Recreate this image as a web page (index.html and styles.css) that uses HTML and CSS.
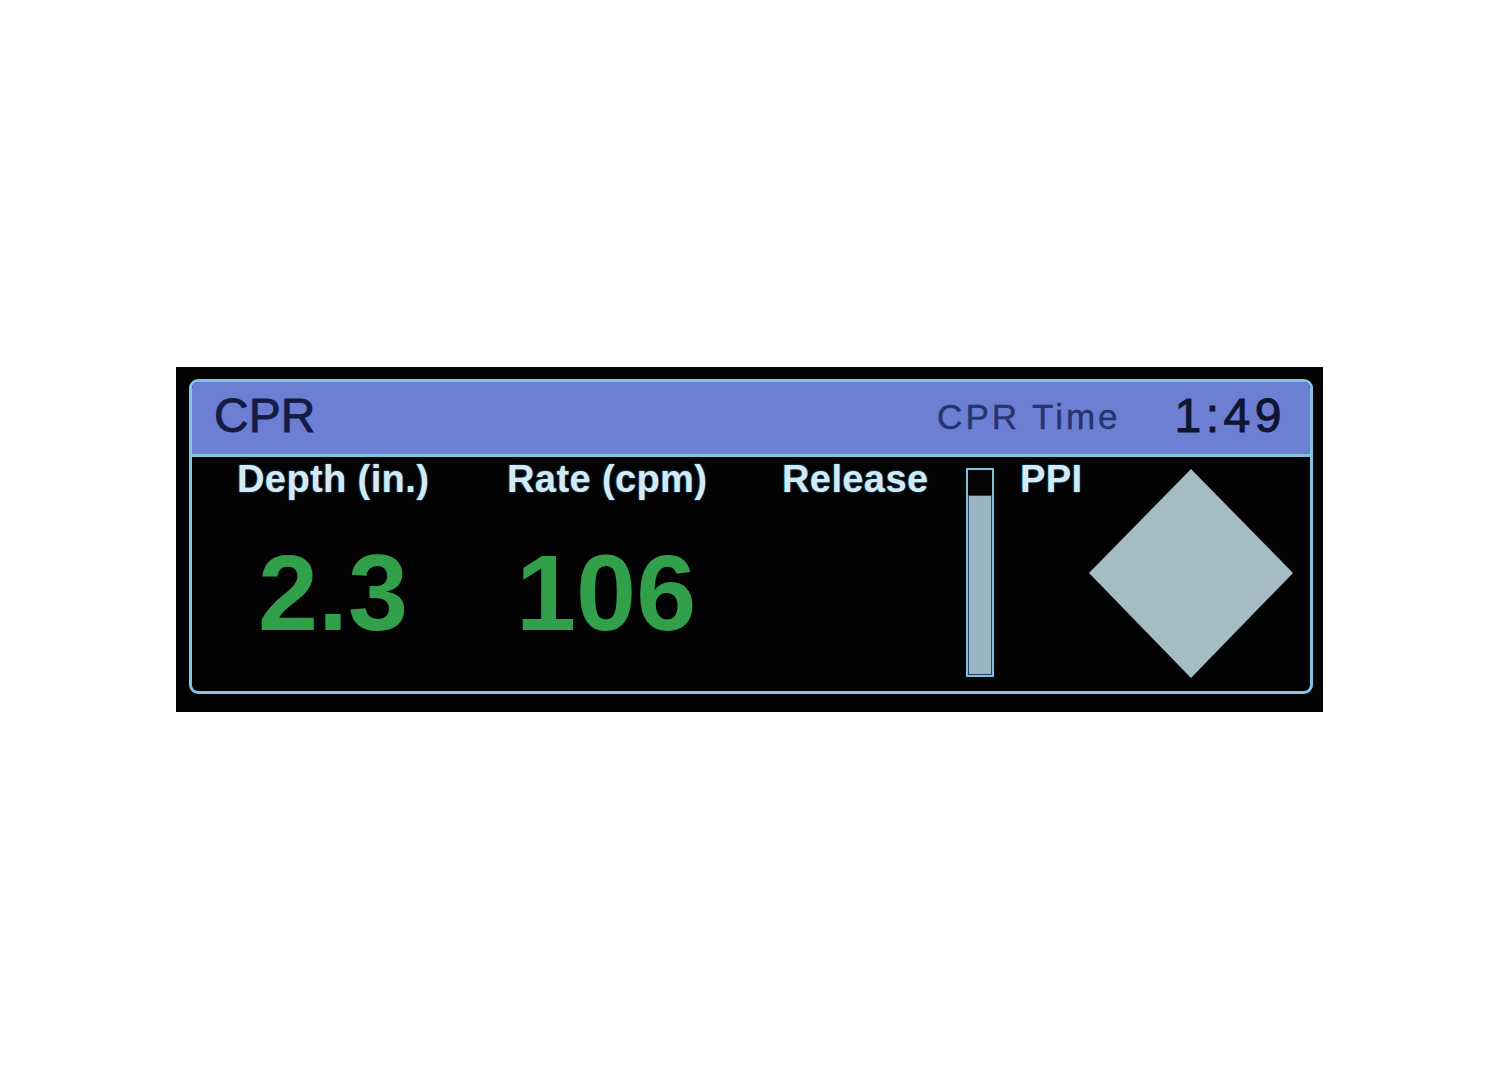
FILE: index.html
```html
<!DOCTYPE html>
<html lang="en">
  <head>
    <meta charset="UTF-8" />
    <meta name="viewport" content="width=device-width, initial-scale=1.0" />
    <title>CPR Monitor</title>
    <link rel="stylesheet" href="styles.css">
  </head>
  <body>
    <div class="screen">
      <div class="panel">
        <div class="header">
          <span class="title">CPR</span>
          <span class="time-label">CPR Time</span>
          <span class="time">1:49</span>
        </div>

        <div class="readouts">
          <div class="col col-depth">
            <div class="label">Depth (in.)</div>
            <div class="value">2.3</div>
          </div>
          <div class="col col-rate">
            <div class="label">Rate (cpm)</div>
            <div class="value">106</div>
          </div>
          <div class="col col-release">
            <div class="label">Release</div>
          </div>
          <div class="bar">
            <div class="bar-fill" style="height: 87%"></div>
          </div>
          <div class="col col-ppi">
            <div class="label">PPI</div>
            <svg class="diamond" width="206" height="211" viewBox="0 0 206 211">
              <polygon points="1,105 103,1 205,105 103,210" fill="#a5bcc4" />
            </svg>
          </div>
        </div>
      </div>
    </div>
  </body>
</html>
```

FILE: styles.css
```css
body {
  margin: 0;
  padding-top: 367px;
  background-color: #ffffff;
  font-family: "Liberation Sans", Arial, sans-serif;
}

.screen {
  width: 1147px;
  height: 345px;
  margin: 0 auto 0 176px;
  padding: 12px 10px 18px 13px;
  box-sizing: border-box;
  background-color: #030303;
}

.panel {
  height: 100%;
  box-sizing: border-box;
  border: 3px solid #84c3e4;
  border-radius: 9px;
  overflow: hidden;
  display: flex;
  flex-direction: column;
}

.header {
  height: 75px;
  flex-shrink: 0;
  display: flex;
  align-items: center;
  padding: 0 24px 6px 22px;
  box-sizing: border-box;
  background-color: #6c7fd3;
  border-bottom: 3px solid #84c3e4;
}

.title {
  font-size: 48px;
  color: #151a46;
  -webkit-text-stroke: 0.8px #151a46;
  flex: 1;
}

.time-label {
  font-size: 35px;
  letter-spacing: 3px;
  color: #27326f;
  -webkit-text-stroke: 0.4px #27326f;
  margin-right: 54px;
  padding-top: 3px;
}

.time {
  font-size: 48px;
  letter-spacing: 4.5px;
  color: #0f1431;
  -webkit-text-stroke: 1px #0f1431;
}

.readouts {
  flex: 1;
  display: flex;
}

.label {
  margin-top: 2px;
  font-size: 38px;
  font-weight: bold;
  letter-spacing: 0.4px;
  line-height: 40px;
  color: #d4eaf3;
  text-shadow: 0 0 2px #3a8ccc;
  white-space: nowrap;
}

.value {
  margin-top: 40px;
  font-size: 108px;
  font-weight: bold;
  line-height: 108px;
  color: #32a04b;
}

.col-depth {
  width: 308px;
}

.col-depth .label {
  padding-left: 45px;
}

.col-depth .value {
  padding-left: 66px;
}

.col-rate {
  width: 270px;
}

.col-rate .label {
  padding-left: 7px;
}

.col-rate .value {
  padding-left: 16px;
}

.col-release {
  width: 196px;
}

.col-release .label {
  padding-left: 12px;
}

.bar {
  width: 28px;
  height: 209px;
  margin-top: 11px;
  box-sizing: border-box;
  border: 2px solid #7fc0dc;
  background-color: #050505;
  display: flex;
  flex-direction: column;
  justify-content: flex-end;
}

.bar-fill {
  background-color: #9ab5bf;
  border: 1px solid #27406a;
}

.col-ppi {
  flex: 1;
  display: flex;
  justify-content: space-between;
  padding-left: 26px;
  padding-right: 16px;
}

.diamond {
  margin-top: 11px;
}
```
